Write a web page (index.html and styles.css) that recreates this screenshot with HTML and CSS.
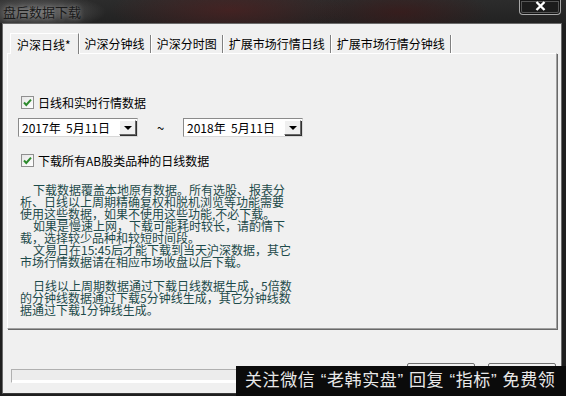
FILE: index.html
```html
<!DOCTYPE html>
<html lang="zh-CN">
<head>
    <meta charset="UTF-8">
    <meta name="viewport" content="width=device-width, initial-scale=1.0">
    <title>盘后数据下载</title>
    <link rel="stylesheet" href="styles.css">
</head>
<body>
    <div class="window">
        <div class="titlebar">
            <span class="title">盘后数据下载</span>
            <div class="close">
                <svg width="11" height="10" viewBox="0 0 11 10">
                    <path d="M1.5 1 L9.5 9 M9.5 1 L1.5 9" stroke="#fff" stroke-width="2.4"/>
                </svg>
            </div>
        </div>

        <div class="client">
            <div class="tabs">
                <div class="tab active">沪深日线*</div>
                <div class="tab">沪深分钟线</div>
                <div class="tab">沪深分时图</div>
                <div class="tab">扩展市场行情日线</div>
                <div class="tab">扩展市场行情分钟线</div>
            </div>

            <div class="pane">
                <label class="check">
                    <span class="box">
                        <svg width="13" height="13" viewBox="0 0 13 13">
                            <polyline points="3,6.5 5.3,9 10,3.6" fill="none" stroke="#2d8a2d" stroke-width="2"/>
                        </svg>
                    </span>
                    日线和实时行情数据
                </label>

                <div class="dates">
                    <div class="datebox">
                        <span class="date-text">2017年&nbsp; 5月11日</span>
                        <span class="drop"><i></i></span>
                    </div>
                    <span class="tilde">~</span>
                    <div class="datebox">
                        <span class="date-text">2018年&nbsp; 5月11日</span>
                        <span class="drop"><i></i></span>
                    </div>
                </div>

                <label class="check check-ab">
                    <span class="box">
                        <svg width="13" height="13" viewBox="0 0 13 13">
                            <polyline points="3,6.5 5.3,9 10,3.6" fill="none" stroke="#2d8a2d" stroke-width="2"/>
                        </svg>
                    </span>
                    下载所有AB股类品种的日线数据
                </label>

                <div class="notes">
                    <p>下载数据覆盖本地原有数据。所有选股、报表分<br>析、日线以上周期精确复权和脱机浏览等功能需要<br>使用这些数据，如果不使用这些功能,不必下载。</p>
                    <p>如果是慢速上网，下载可能耗时较长，请酌情下<br>载，选择较少品种和较短时间段。</p>
                    <p>文易日在15:45后才能下载到当天沪深数据，其它<br>市场行情数据请在相应市场收盘以后下载。</p>
                    <p class="gap">日线以上周期数据通过下载日线数据生成，5倍数<br>的分钟线数据通过下载5分钟线生成，其它分钟线数<br>据通过下载1分钟线生成。</p>
                </div>
            </div>

            <div class="footer">
                <div class="progress"></div>
                <div class="buttons">
                    <!-- 按钮文字被下方水印挡住 -->
                    <button class="btn"></button>
                    <button class="btn"></button>
                </div>
            </div>
        </div>

        <div class="ad">关注微信 “老韩实盘” 回复 “指标” 免费领</div>
    </div>
</body>
</html>
```

FILE: styles.css
```css
body {
    margin: 0;
    width: 566px;
    height: 396px;
    overflow: hidden;
    background: #1f1f1f;
    font-family: "Noto Sans CJK SC", "Liberation Sans", sans-serif;
    font-size: 12px;
    color: #000;
}

.window {
    position: relative;
    width: 566px;
    height: 396px;
    display: flex;
    flex-direction: column;
}

/* 标题栏 */
.titlebar {
    height: 23px;
    display: flex;
    align-items: flex-start;
    background:
        radial-gradient(ellipse 70px 18px at 36px 12px, rgba(130, 130, 130, 0.7), transparent),
        radial-gradient(ellipse 120px 30px at 230px 10px, rgba(90, 30, 30, 0.55), transparent),
        radial-gradient(ellipse 90px 25px at 400px 12px, rgba(70, 20, 20, 0.5), transparent),
        linear-gradient(#2c2c2c, #222);
}

.title {
    padding: 4px 0 0 3px;
    font-size: 13px;
    line-height: 15px;
    color: #1a1a1a;
    text-shadow: 0 0 5px rgba(255, 255, 255, 0.45);
}

.close {
    margin-left: auto;
    margin-right: 5px;
    width: 42px;
    height: 15px;
    box-sizing: border-box;
    border: 1px solid #a8a8a8;
    border-top: none;
    border-radius: 0 0 4px 4px;
    box-shadow: inset 0 0 0 1px #151515, inset 0 0 0 2px #555;
    background: #1c1c1c;
    display: flex;
    justify-content: center;
    padding-top: 1px;
}

/* 客户区 */
.client {
    margin-left: 2px;
    width: 560px;
    height: 371px;
    box-sizing: border-box;
    border: 1px solid #6a6a6a;
    border-bottom-color: #3a3a3a;
    background: #f0f0f0;
    padding: 9px 4px 0 4px;
    display: flex;
    flex-direction: column;
}

.tabs {
    display: flex;
    height: 20px;
    padding-left: 3px;
}

.tab {
    height: 18px;
    margin-top: 2px;
    padding: 0 5px 0 5px;
    line-height: 18px;
    border-right: 1px solid #808080;
    box-shadow: 1px 0 0 #fff;
    margin-right: 1px;
    white-space: nowrap;
}

.tab.active {
    height: 20px;
    margin-top: 0;
    padding: 0 7px 0 6px;
    line-height: 21px;
    border-left: 1px solid #fff;
    border-top: 1px solid #fff;
    position: relative;
    z-index: 1;
    background: #f0f0f0;
    margin-bottom: -1px;
}

.pane {
    height: 276px;
    box-sizing: border-box;
    border-top: 1px solid #fff;
    border-left: 1px solid #fff;
    border-right: 1px solid #a0a0a0;
    border-bottom: 1px solid #a0a0a0;
    box-shadow: 1px 1px 0 #696969;
    padding: 42px 0 0 10px;
}

.check {
    display: flex;
    align-items: center;
    height: 13px;
    padding-left: 3px;
    gap: 4px;
    white-space: nowrap;
}

.check-ab {
    margin-top: 17px;
}

.box {
    width: 13px;
    height: 13px;
    box-sizing: border-box;
    border: 1px solid #8f8f8f;
    background: linear-gradient(135deg, #e6e6e6, #fff);
    display: flex;
}

.box svg {
    margin: -1px;
}

.dates {
    display: flex;
    align-items: center;
    margin-top: 9px;
    height: 19px;
}

.datebox {
    width: 120px;
    height: 19px;
    box-sizing: border-box;
    border: 1px solid #8a8a8a;
    border-right-color: #d8d8d8;
    border-bottom-color: #d8d8d8;
    background: #fff;
    display: flex;
    align-items: center;
    justify-content: space-between;
    padding: 0 1px 0 3px;
}

.date-text {
    white-space: nowrap;
    line-height: 17px;
}

.drop {
    width: 17px;
    height: 15px;
    box-sizing: border-box;
    background: #f0f0f0;
    border: 1px solid #fff;
    border-right-color: #696969;
    border-bottom-color: #696969;
    box-shadow: 1px 1px 0 #303030;
    display: flex;
    align-items: center;
    justify-content: center;
}

.drop i {
    width: 0;
    height: 0;
    border-left: 4px solid transparent;
    border-right: 4px solid transparent;
    border-top: 4px solid #000;
}

.tilde {
    width: 45px;
    text-align: center;
    font-size: 13px;
}

/* 说明文字 */
.notes {
    margin-top: 17px;
    padding-left: 2px;
    color: #1d4a4a;
    line-height: 12px;
    white-space: nowrap;
}

.notes p {
    margin: 0;
    text-indent: 13px;
}

.notes p.gap {
    margin-top: 12px;
}

.footer {
    flex: 1;
    display: flex;
    align-items: flex-start;
    padding-left: 4px;
}

.progress {
    margin-top: 40px;
    width: 384px;
    height: 14px;
    box-sizing: border-box;
    border: 1px solid #b0b0b0;
    border-right-color: #fff;
    border-bottom-color: #fff;
    box-shadow: inset 0 -2px 0 #fff;
    background: #ececec;
}

.buttons {
    display: flex;
    gap: 13px;
    margin-left: auto;
    margin-top: 34px;
    margin-right: 1px;
}

.btn {
    width: 68px;
    height: 23px;
    border: 1px solid #707070;
    border-radius: 2px;
    background: linear-gradient(#f2f2f2, #dcdcdc);
}

/* 水印广告条 */
.ad {
    position: absolute;
    left: 236px;
    top: 366px;
    width: 330px;
    height: 30px;
    box-sizing: border-box;
    padding-left: 9px;
    background: #0b0b0b;
    color: #e8e8e8;
    font-family: "Liberation Sans", "Noto Sans CJK SC", sans-serif;
    font-size: 17px;
    letter-spacing: 0.6px;
    line-height: 30px;
    white-space: nowrap;
}
```
